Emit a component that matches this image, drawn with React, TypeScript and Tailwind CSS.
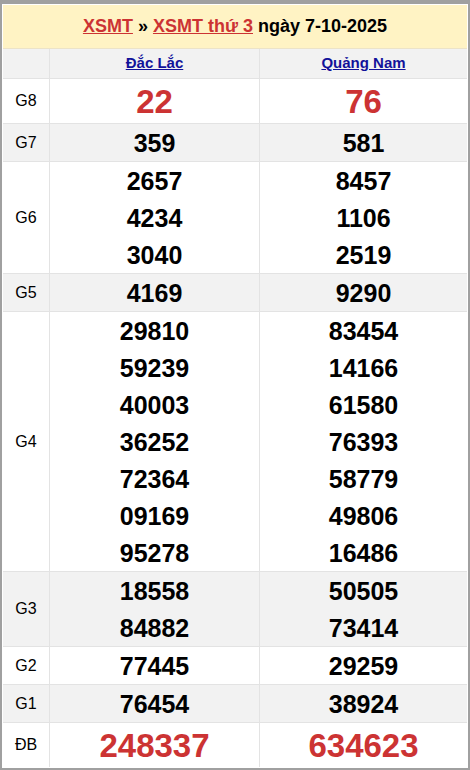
import React from 'react';

type Prize = {
  label: string;
  a: string[];
  b: string[];
  big?: boolean;
  shaded?: boolean;
};

const prizes: Prize[] = [
  { label: 'G8', a: ['22'], b: ['76'], big: true },
  { label: 'G7', a: ['359'], b: ['581'], shaded: true },
  { label: 'G6', a: ['2657', '4234', '3040'], b: ['8457', '1106', '2519'] },
  { label: 'G5', a: ['4169'], b: ['9290'], shaded: true },
  {
    label: 'G4',
    a: ['29810', '59239', '40003', '36252', '72364', '09169', '95278'],
    b: ['83454', '14166', '61580', '76393', '58779', '49806', '16486'],
  },
  { label: 'G3', a: ['18558', '84882'], b: ['50505', '73414'], shaded: true },
  { label: 'G2', a: ['77445'], b: ['29259'] },
  { label: 'G1', a: ['76454'], b: ['38924'], shaded: true },
  { label: 'ĐB', a: ['248337'], b: ['634623'], big: true },
];

const NumberCell: React.FC<{ nums: string[]; big?: boolean; last?: boolean }> = ({ nums, big, last }) => (
  <div className={`flex flex-col items-center ${last ? '' : 'border-r border-[#e3e3e3]'}`}>
    {nums.map((n, i) => (
      <div
        key={i}
        className={
          big
            ? 'h-[44px] leading-[46px] text-[33px] font-bold text-[#cc3333]'
            : 'h-[37px] leading-[38px] text-[25px] font-bold text-black'
        }
      >
        {n}
      </div>
    ))}
  </div>
);

const App: React.FC = () => {
  return (
    <div
      className="w-[470px] h-[770px] overflow-hidden bg-white border-2 border-t-4 border-[#a0a0a0] p-px"
      style={{ fontFamily: '"Liberation Sans", Arial, sans-serif' }}
    >
      <div className="h-[44px] bg-[#fff3c4] border-b border-[#ece3c8] flex items-center justify-center text-[18px] font-bold">
        <a href="#" className="text-[#cc3333] underline">XSMT</a>
        <span className="mx-[5px] text-black">»</span>
        <a href="#" className="text-[#cc3333] underline">XSMT thứ 3</a>
        <span className="ml-[5px] text-black">ngày 7-10-2025</span>
      </div>

      <div className="grid grid-cols-[47px_210px_207px] h-[30px] bg-[#f2f2f2] border-b border-[#e3e3e3]">
        <div className="border-r border-[#e3e3e3]" />
        <div className="flex items-center justify-center border-r border-[#e3e3e3]">
          <a href="#" className="text-[15px] font-bold text-[#12129a] underline">Đắc Lắc</a>
        </div>
        <div className="flex items-center justify-center">
          <a href="#" className="text-[15px] font-bold text-[#12129a] underline">Quảng Nam</a>
        </div>
      </div>

      {prizes.map((p, idx) => (
        <div
          key={p.label}
          className={`grid grid-cols-[47px_210px_207px] ${p.shaded ? 'bg-[#f2f2f2]' : 'bg-white'} ${
            idx === prizes.length - 1 ? '' : 'border-b border-[#e3e3e3]'
          }`}
        >
          <div className="flex items-center justify-center border-r border-[#e3e3e3] text-[16px] text-black">
            {p.label}
          </div>
          <NumberCell nums={p.a} big={p.big} />
          <NumberCell nums={p.b} big={p.big} last />
        </div>
      ))}
    </div>
  );
};

export default App;
